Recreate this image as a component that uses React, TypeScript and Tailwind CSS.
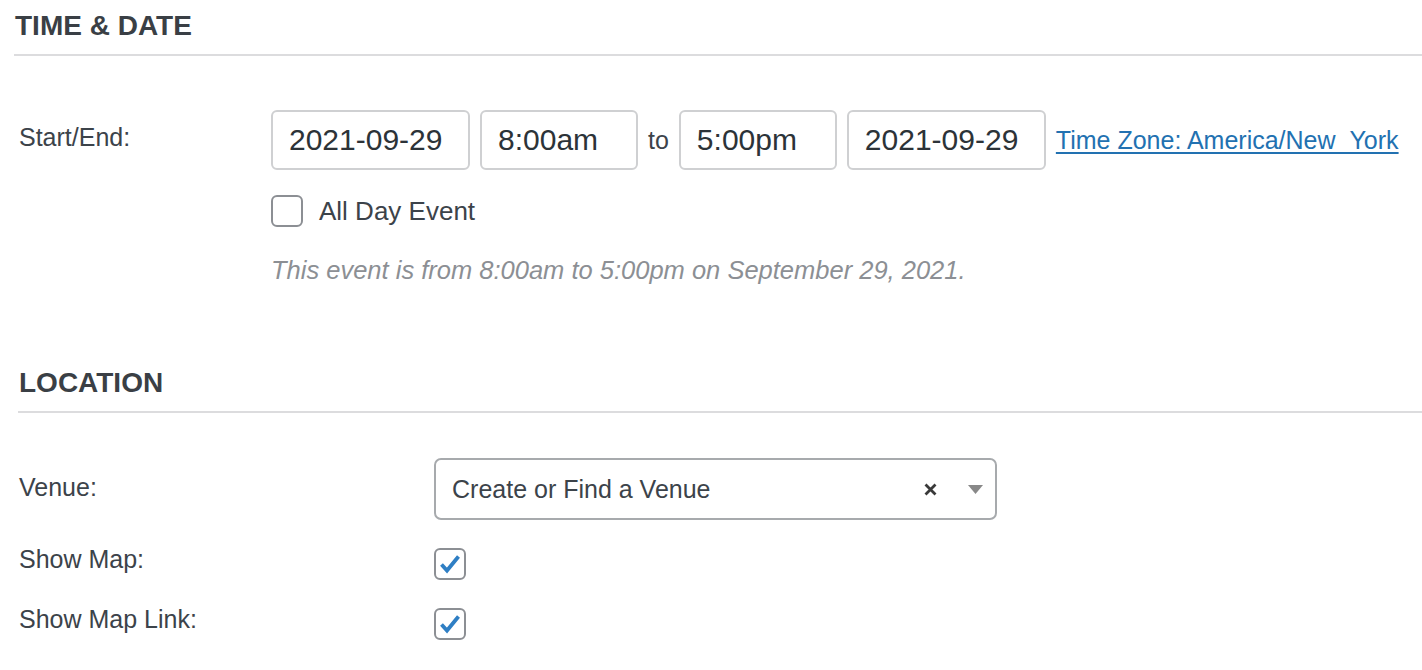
import type { ReactNode } from "react";

function SectionTitle({ children }: { children: ReactNode }) {
  return (
    <div className="border-b-2 border-[#dcdcde] pb-[15px] pt-[12px]">
      <h2 className="pl-[1px] text-[28px] font-bold leading-[27px] text-[#3a3f45]">{children}</h2>
    </div>
  );
}

function TextBox({ value, width }: { value: string; width: string }) {
  return (
    <input
      readOnly
      value={value}
      className={`h-[60px] ${width} shrink-0 rounded-[6px] border-2 border-[#cfd0d2] bg-white pl-[16px] text-[30px] text-[#2c3338] outline-none`}
    />
  );
}

function Check({ checked }: { checked?: boolean }) {
  return (
    <span className="flex h-[32px] w-[32px] shrink-0 items-center justify-center rounded-[6px] border-2 border-[#8c8f94] bg-white">
      {checked ? (
        <svg viewBox="0 0 22 20" className="h-[20px] w-[22px]" aria-hidden>
          <path
            d="M2.5 10.5 L8 16.5 L19.5 2.5"
            fill="none"
            stroke="#2f7fc4"
            strokeWidth="3.8"
            strokeLinejoin="miter"
          />
        </svg>
      ) : null}
    </span>
  );
}

function Label({ children }: { children: ReactNode }) {
  return <span className="text-[25px] leading-[25px] text-[#3c434a]">{children}</span>;
}

export default function App() {
  return (
    <div className="h-[670px] w-[1422px] overflow-hidden bg-white font-['Liberation_Sans',Arial,sans-serif] text-[#3c434a]">
      <section className="pl-[14px]">
        <SectionTitle>TIME &amp; DATE</SectionTitle>

        <div className="mt-[54px] flex">
          <div className="w-[257px] shrink-0 pl-[5px] pt-[15px]">
            <Label>Start/End:</Label>
          </div>
          <div className="flex flex-col">
            <div className="flex items-center gap-[10px]">
              <TextBox value="2021-09-29" width="w-[199px]" />
              <TextBox value="8:00am" width="w-[158px]" />
              <span className="text-[25px] leading-[25px] text-[#3c434a]">to</span>
              <TextBox value="5:00pm" width="w-[158px]" />
              <TextBox value="2021-09-29" width="w-[199px]" />
              <a href="#" className="whitespace-nowrap text-[25px] leading-[25px] text-[#2271b1] underline underline-offset-[3px]">
                Time Zone: America/New_York
              </a>
            </div>
            <label className="mt-[25px] flex items-center gap-[16px]">
              <Check />
              <span className="text-[26px] leading-[26px] text-[#3c434a]">All Day Event</span>
            </label>
            <p className="mt-[30px] text-[25.5px] italic leading-[26px] text-[#8c8f94]">
              This event is from 8:00am to 5:00pm on September 29, 2021.
            </p>
          </div>
        </div>
      </section>

      <section className="mt-[74px] pl-[18px]">
        <SectionTitle>LOCATION</SectionTitle>

        <div className="mt-[45px] flex items-center">
          <div className="w-[416px] shrink-0 pl-[1px]">
            <Label>Venue:</Label>
          </div>
          <div className="flex h-[62px] w-[563px] items-center rounded-[7px] border-2 border-[#a7aaad] bg-white pl-[16px] pr-[12px]">
            <span className="flex-1 text-[25px] leading-[25px] text-[#3c434a]">Create or Find a Venue</span>
            <svg viewBox="0 0 13 13" className="mr-[31px] h-[13px] w-[13px]" aria-hidden>
              <path d="M1.5 1.5 L11.5 11.5 M11.5 1.5 L1.5 11.5" stroke="#3a3a3a" strokeWidth="2.8" />
            </svg>
            <svg viewBox="0 0 15 9" className="h-[9px] w-[15px]" aria-hidden>
              <polygon points="0,0 15,0 7.5,9" fill="#888888" />
            </svg>
          </div>
        </div>

        <div className="mt-[27px] flex items-center">
          <div className="mb-[6px] w-[416px] shrink-0 pl-[1px]">
            <Label>Show Map:</Label>
          </div>
          <Check checked />
        </div>

        <div className="mt-[26px] flex items-center">
          <div className="mb-[6px] w-[416px] shrink-0 pl-[1px]">
            <Label>Show Map Link:</Label>
          </div>
          <Check checked />
        </div>
      </section>
    </div>
  );
}
